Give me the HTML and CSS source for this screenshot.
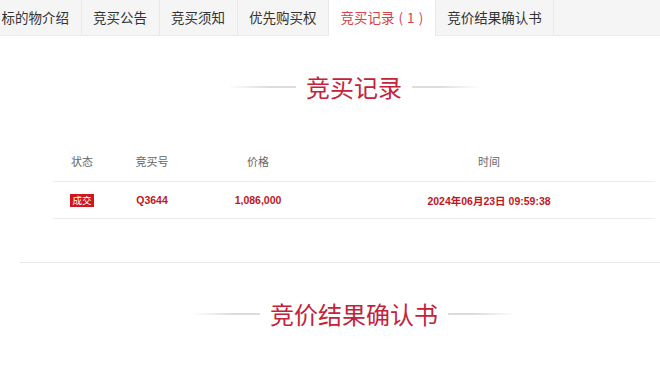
FILE: index.html
```html
<!DOCTYPE html>
<html lang="zh-CN">
<head>
    <meta charset="UTF-8">
    <meta name="viewport" content="width=device-width, initial-scale=1.0">
    <title>竞买记录</title>
    <link rel="stylesheet" href="styles.css">
</head>
<body>
    <nav class="tabs">
        <a class="tab" href="#">标的物介绍</a>
        <a class="tab" href="#">竞买公告</a>
        <a class="tab" href="#">竞买须知</a>
        <a class="tab" href="#">优先购买权</a>
        <a class="tab active" href="#">竞买记录 ( 1 )</a>
        <a class="tab" href="#">竞价结果确认书</a>
    </nav>

    <div class="content">
        <h2 class="section-title">竞买记录</h2>

        <div class="records">
            <div class="row head">
                <span>状态</span>
                <span>竞买号</span>
                <span>价格</span>
                <span>时间</span>
            </div>
            <div class="row data">
                <span><em class="badge">成交</em></span>
                <span>Q3644</span>
                <span>1,086,000</span>
                <span>2024年06月23日 09:59:38</span>
            </div>
        </div>

        <hr class="divider">

        <h2 class="section-title">竞价结果确认书</h2>
    </div>
</body>
</html>
```

FILE: styles.css
```css
html, body {
    overflow: hidden;
}
body {
    margin: 0;
    font-family: "Noto Sans CJK SC", sans-serif;
    background-color: #fff;
    color: #333;
}
.tabs {
    display: flex;
    margin-left: -10px;
    height: 35px;
    background-color: #f5f5f5;
    border-bottom: 1px solid #ebebeb;
}
.tab {
    padding: 0 11.5px;
    line-height: 35px;
    font-size: 13.5px;
    color: #333;
    text-decoration: none;
    border-right: 1px solid #e8e8e8;
    white-space: pre;
}
.tab.active {
    background-color: #fff;
    color: #d6434d;
    height: 36px;
    word-spacing: 1px;
}
.content {
    width: 668px;
    margin-left: 20px;
}
.section-title {
    display: flex;
    align-items: center;
    justify-content: center;
    gap: 10px;
    margin: 35px 0 0;
    font-size: 24px;
    font-weight: normal;
    line-height: 32px;
    color: #c4223a;
}
.section-title::before,
.section-title::after {
    content: "";
    width: 68px;
    height: 2px;
}
.section-title::before {
    background: linear-gradient(to right, rgba(220, 220, 220, 0), #dcdcdc 60%);
}
.section-title::after {
    background: linear-gradient(to left, rgba(220, 220, 220, 0), #dcdcdc 60%);
}
.records {
    margin: 38px 33px 0;
}
.row {
    display: grid;
    grid-template-columns: 58px 82px 130px 1fr;
    align-items: center;
    text-align: center;
    border-bottom: 1px solid #ececec;
}
.row.head {
    height: 40px;
    font-size: 11px;
    color: #666;
}
.row.data {
    height: 36px;
    font-family: "Liberation Sans", "Noto Sans CJK SC", sans-serif;
    font-size: 10.5px;
    font-weight: bold;
    color: #c0161e;
}
.badge {
    display: inline-block;
    padding: 0 2px;
    line-height: 13px;
    font-style: normal;
    font-weight: normal;
    font-size: 9.5px;
    color: #fff;
    background-color: #d0161d;
    font-family: "Noto Sans CJK SC", sans-serif;
}
.divider {
    margin: 43px 0 0;
    border: none;
    border-top: 1px solid #e8e8e8;
}
```
